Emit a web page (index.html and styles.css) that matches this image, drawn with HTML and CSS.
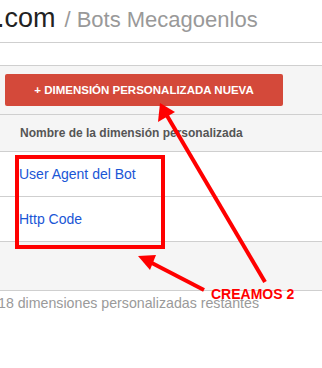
FILE: index.html
```html
<!DOCTYPE html>
<html lang="es">
  <head>
    <meta charset="UTF-8" />
    <title>Dimensiones personalizadas</title>
    <link rel="stylesheet" href="styles.css">
  </head>
  <body>
    <section class="page">
      <h1 class="title">
        <span class="domain">.com</span>
        <span class="crumb">/ Bots Mecagoenlos</span>
      </h1>
      <div class="subbar"></div>

      <div class="toolbar">
        <button class="btn-new">+ DIMENSIÓN PERSONALIZADA NUEVA</button>
      </div>

      <div class="table-head">Nombre de la dimensión personalizada</div>
      <div class="table-row"><a href="#">User Agent del Bot</a></div>
      <div class="table-row"><a href="#">Http Code</a></div>
      <div class="table-foot"></div>

      <p class="remaining">18 dimensiones personalizadas restantes</p>

      <!-- anotaciones -->
      <svg class="notes" width="322" height="368" viewBox="0 0 322 368">
        <rect x="17" y="157" width="146" height="90" fill="none" stroke="#ff0000" stroke-width="4" />
        <line x1="265" y1="282" x2="166" y2="114" stroke="#ff0000" stroke-width="4" />
        <polygon points="160,103 158,122 175,112" fill="#ff0000" />
        <line x1="204" y1="290" x2="148" y2="261" stroke="#ff0000" stroke-width="4" />
        <polygon points="138,256 150,270 156,255" fill="#ff0000" />
      </svg>
      <span class="note-text">CREAMOS 2</span>
    </section>
  </body>
</html>
```

FILE: styles.css
```css
html,
body {
  padding: 0;
  margin: 0;
}

body {
  font-family: "Liberation Sans", Arial, sans-serif;
  background-color: #fff;
}

.page {
  position: relative;
  width: 322px;
  height: 368px;
  overflow: hidden;
}

.title {
  margin: 0;
  height: 42px;
  border-bottom: 1px solid #cfcfcf;
  white-space: nowrap;
  font-weight: normal;
  line-height: 32px;
  margin-left: -3px;
}

.domain {
  font-size: 27px;
  color: #222;
}

.crumb {
  font-size: 22px;
  color: #999;
}

.subbar {
  height: 22px;
  border-bottom: 1px solid #cfcfcf;
}

.toolbar {
  background-color: #f5f5f5;
  padding: 8px 0 8px 5px;
  border-bottom: 1px solid #cfcfcf;
}

.btn-new {
  display: block;
  width: 278px;
  height: 32px;
  border: 0;
  border-radius: 2px;
  background-color: #d4493a;
  color: #fff;
  font-family: inherit;
  font-size: 11.5px;
  font-weight: bold;
  padding: 0;
}

.table-head {
  background-color: #f5f5f5;
  height: 36px;
  line-height: 36px;
  padding-left: 20px;
  font-size: 12px;
  font-weight: bold;
  color: #555;
  border-bottom: 1px solid #cfcfcf;
}

.table-row {
  height: 44px;
  line-height: 44px;
  padding-left: 19px;
  border-bottom: 1px solid #cfcfcf;
  font-size: 14px;
}

.table-row a {
  color: #1a56d6;
  text-decoration: none;
}

.table-foot {
  background-color: #f5f5f5;
  height: 48px;
  border-bottom: 1px solid #cfcfcf;
}

.remaining {
  margin: 4px 0 0 -2px;
  font-size: 14.2px;
  color: #9a9a9a;
  white-space: nowrap;
}

.notes {
  position: absolute;
  left: 0;
  top: 0;
}

.note-text {
  position: absolute;
  left: 211px;
  top: 286px;
  font-size: 14px;
  font-weight: bold;
  color: #ff0000;
}
```
